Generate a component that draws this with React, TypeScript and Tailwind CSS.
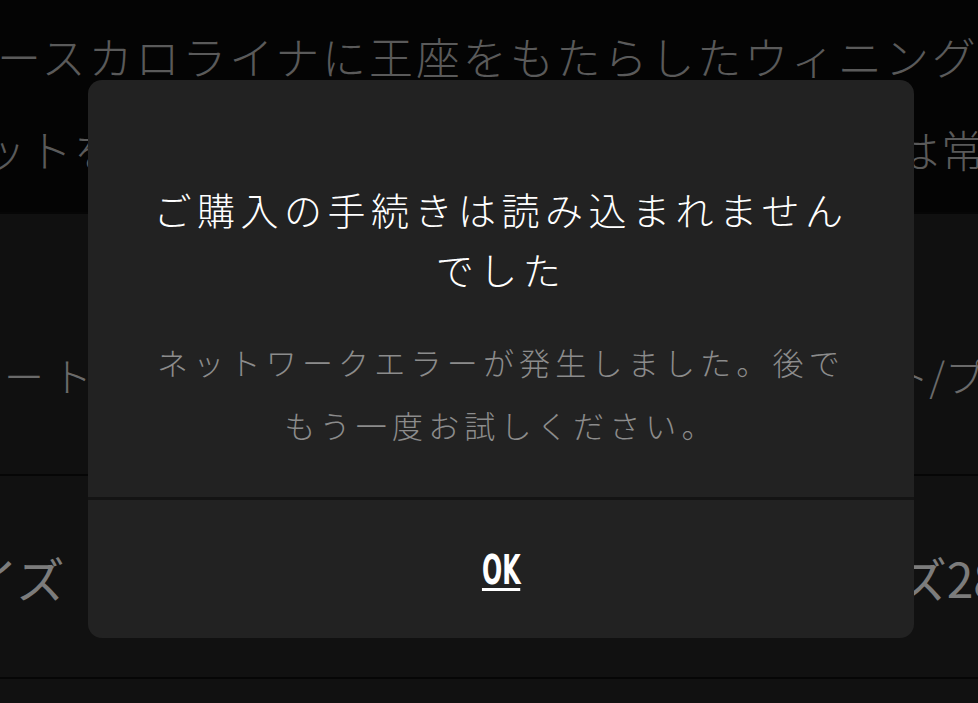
import React from 'react';

const jp = { fontFamily: '"Noto Sans CJK JP", "Noto Sans", sans-serif' };

export default function App() {
  return (
    <div className="relative h-[703px] w-[978px] overflow-hidden bg-[#111111]" style={jp}>
      {/* page behind the dialog */}
      <div className="h-[212px] overflow-hidden bg-[#040404] pt-[8px] text-[44px] font-light text-[#5a5a5a]">
        <div className="-ml-[50px] whitespace-nowrap leading-[96px] tracking-[2.9px]">
          ノースカロライナに王座をもたらしたウィニング
        </div>
        <div className="flex justify-between whitespace-nowrap leading-[90px] tracking-[2px]">
          <span className="-ml-[18px]">ットを沈めた若きマイケル</span>
          <span className="-mr-[55px]">は常に</span>
        </div>
      </div>
      <div className="h-[2px] bg-[#060606]" />
      <div className="flex h-[260px] items-center justify-between overflow-hidden whitespace-nowrap bg-[#101010] pt-[62px] text-[40px] font-light text-[#6a6a6a]">
        <span className="-ml-[44px] tracking-[8px]">ュート</span>
        <span className="-mr-[47px]">ト/プロ</span>
      </div>
      <div className="h-[2px] bg-[#060606]" />
      <div className="flex h-[201px] items-center justify-between overflow-hidden whitespace-nowrap bg-[#111111] text-[48px] text-[#7c7c7c]">
        <span className="-ml-[30px]">イズ</span>
        <span className="-mr-[22px]">ズ28</span>
      </div>
      <div className="h-[2px] bg-[#060606]" />
      <div className="h-[26px] bg-[#111111]" />

      {/* dialog */}
      <div className="absolute left-[88px] top-[80px] flex h-[558px] w-[826px] flex-col overflow-hidden rounded-[14px] bg-[#222222]">
        <div className="flex flex-1 flex-col items-center px-[40px] pt-[99px]">
          <h2 className="text-center text-[38px] font-light leading-[60px] tracking-[5.5px] text-white">
            ご購入の手続きは読み込まれません
            <br />
            でした
          </h2>
          <p className="mt-[31px] text-center text-[31px] font-light leading-[63px] tracking-[5.2px] text-[#8c8c8c]">
            ネットワークエラーが発生しました。後で
            <br />
            もう一度お試しください。
          </p>
        </div>
        <div className="h-[3px] bg-[#141414]" />
        <button className="flex h-[138px] items-center justify-center pt-[6px]">
          <span
            className="border-b-[3px] border-white pb-[2px] text-[40px] font-bold leading-[32px] text-white"
            style={{ fontFamily: '"DejaVu Sans Condensed", "DejaVu Sans", sans-serif', transform: 'scaleX(0.66)' }}
          >
            OK
          </span>
        </button>
      </div>
    </div>
  );
}
